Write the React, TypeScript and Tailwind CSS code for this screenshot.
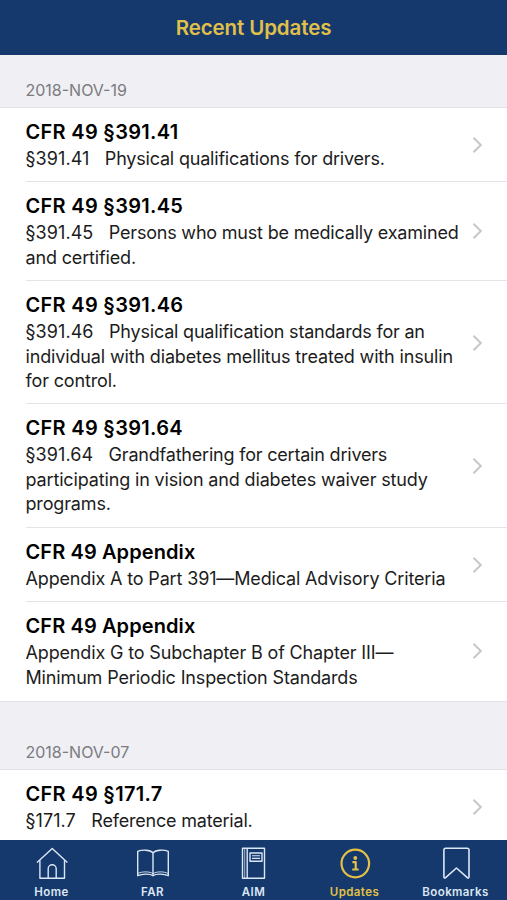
import type { ReactNode } from "react";

type Entry = {
  title: string;
  ref?: string;
  lines: string[];
};

type Section = {
  date: string;
  entries: Entry[];
};

const sections: Section[] = [
  {
    date: "2018-NOV-19",
    entries: [
      {
        title: "CFR 49 §391.41",
        ref: "§391.41",
        lines: ["Physical qualifications for drivers."],
      },
      {
        title: "CFR 49 §391.45",
        ref: "§391.45",
        lines: ["Persons who must be medically examined", "and certified."],
      },
      {
        title: "CFR 49 §391.46",
        ref: "§391.46",
        lines: [
          "Physical qualification standards for an",
          "individual with diabetes mellitus treated with insulin",
          "for control.",
        ],
      },
      {
        title: "CFR 49 §391.64",
        ref: "§391.64",
        lines: [
          "Grandfathering for certain drivers",
          "participating in vision and diabetes waiver study",
          "programs.",
        ],
      },
      {
        title: "CFR 49 Appendix",
        lines: ["Appendix A to Part 391—Medical Advisory Criteria"],
      },
      {
        title: "CFR 49 Appendix",
        lines: [
          "Appendix G to Subchapter B of Chapter III—",
          "Minimum Periodic Inspection Standards",
        ],
      },
    ],
  },
  {
    date: "2018-NOV-07",
    entries: [
      {
        title: "CFR 49 §171.7",
        ref: "§171.7",
        lines: ["Reference material."],
      },
    ],
  },
];

function Chevron() {
  return (
    <svg
      width="12"
      height="18"
      viewBox="0 0 12 18"
      fill="none"
      stroke="#c7c7cc"
      strokeWidth="2"
      className="shrink-0"
    >
      <path d="M1.5 1.8L8.8 9L1.5 16.2" />
    </svg>
  );
}

function Row({ entry, last }: { entry: Entry; last: boolean }) {
  return (
    <li className="relative flex items-center pr-[23px] pl-[25.5px]">
      <div className="flex-1 min-w-0 pt-[11px] pb-[10.7px]">
        <h2
          className={
            entry.ref
              ? "text-[20px] leading-[26px] font-semibold tracking-[0.3px] text-black whitespace-pre"
              : "text-[20px] leading-[26px] font-semibold tracking-[0.1px] text-black whitespace-pre"
          }
        >
          {entry.title}
        </h2>
        <div className="mt-[2.3px] text-[18px] leading-[24.45px] text-[#1c1c1c] whitespace-pre">
          {entry.lines.map((line, i) => (
            <p key={line} className="flex">
              {i === 0 && entry.ref && (
                <span className="tracking-[0.08px]">{entry.ref + "   "}</span>
              )}
              <span
                className={
                  i === 0 && entry.ref
                    ? "tracking-[-0.2px]"
                    : "tracking-[-0.15px]"
                }
              >
                {line}
              </span>
            </p>
          ))}
        </div>
      </div>
      <Chevron />
      {!last && (
        <span className="absolute bottom-0 right-0 left-[26px] h-px bg-[#e4e4e6]" />
      )}
    </li>
  );
}

function Tab({
  label,
  active = false,
  children,
}: {
  label: string;
  active?: boolean;
  children: ReactNode;
}) {
  return (
    <button
      className={
        active
          ? "flex w-[101px] flex-col items-center text-[#e3c146]"
          : "flex w-[101px] flex-col items-center text-[#dce7f5]"
      }
    >
      <svg
        width="34"
        height="34"
        viewBox="0 0 34 34"
        fill="none"
        stroke="currentColor"
        strokeWidth="1.4"
        strokeLinejoin="round"
      >
        {children}
      </svg>
      <span className="mt-[3px] text-[11.5px] leading-[16px] font-semibold tracking-[0.4px]">
        {label}
      </span>
    </button>
  );
}

export default function App() {
  return (
    <div className="flex h-[900px] w-[507px] flex-col overflow-hidden bg-[#efeff4] font-['Inter','Liberation_Sans',sans-serif]">
      <header className="flex h-[54.5px] shrink-0 items-center justify-center bg-[#15396c] pt-[2px]">
        <h1 className="text-[20.5px] font-semibold tracking-[-0.1px] text-[#e0c04b]">
          Recent Updates
        </h1>
      </header>

      <main className="flex-1 min-h-0 overflow-hidden">
        {sections.map((section, i) => (
          <section key={section.date}>
            <div
              className={
                i === 0
                  ? "flex h-[53px] items-end border-b border-[#e2e2e6] pl-[25.5px] pb-[7px]"
                  : "flex h-[69px] items-end border-y border-[#e2e2e6] pl-[25.5px] pb-[7px]"
              }
            >
              <span className="text-[16px] leading-[20px] text-[#7b7b80]">
                {section.date}
              </span>
            </div>
            <ul className="bg-white">
              {section.entries.map((entry, n) => (
                <Row
                  key={n}
                  entry={entry}
                  last={n === section.entries.length - 1}
                />
              ))}
            </ul>
          </section>
        ))}
      </main>

      <nav className="flex h-[60px] shrink-0 justify-center bg-[#15396c] pt-[7px]">
        <Tab label="Home">
          <path d="M2 15.5L17.2 1.5L32.4 15.5" />
          <path d="M4.9 13.2V31.2H29.5V13.2" />
          <path d="M13.2 31.2V21.7a4 4 0 0 1 8 0V31.2" />
        </Tab>
        <Tab label="FAR">
          <path d="M17 5.8C14 2.6 6 2.6 1.7 4.3V28.7C6 26.8 14 26.3 17 28.7C20 26.3 28 26.8 32.3 28.7V4.3C28 2.6 20 2.6 17 5.8Z" />
          <path d="M17 5.8V28.7" />
          <path
            d="M2 26.4C6 24.4 14 24.2 17 26.8C20 24.2 28 24.4 32 26.4"
            strokeWidth="0.9"
          />
        </Tab>
        <Tab label="AIM">
          <path d="M5.5 1.2H27.5V31.2H5.5ZM10.2 1.2V31.2" />
          <path d="M7.7 1.2V31.2" strokeWidth="0.7" />
          <path d="M13 6H25V14.2H13Z" />
          <path d="M15 8.8H23M15 11.4H23" strokeWidth="1.1" />
        </Tab>
        <Tab label="Updates" active>
          <circle cx="17.3" cy="16.5" r="13.8" strokeWidth="2.2" />
          <circle cx="17.3" cy="11" r="1.9" fill="currentColor" stroke="none" />
          <path
            d="M14.4 15.2H17.7V22.3M14.2 22.5H20.7"
            strokeWidth="2.2"
          />
        </Tab>
        <Tab label="Bookmarks">
          <path
            d="M4.9 3a1.7 1.7 0 0 1 1.7-1.7H28.3a1.7 1.7 0 0 1 1.7 1.7V30a1 1 0 0 1-1.7.7L17.45 21L6.6 30.7a1 1 0 0 1-1.7-.7Z"
            strokeWidth="1.6"
          />
        </Tab>
      </nav>
    </div>
  );
}
